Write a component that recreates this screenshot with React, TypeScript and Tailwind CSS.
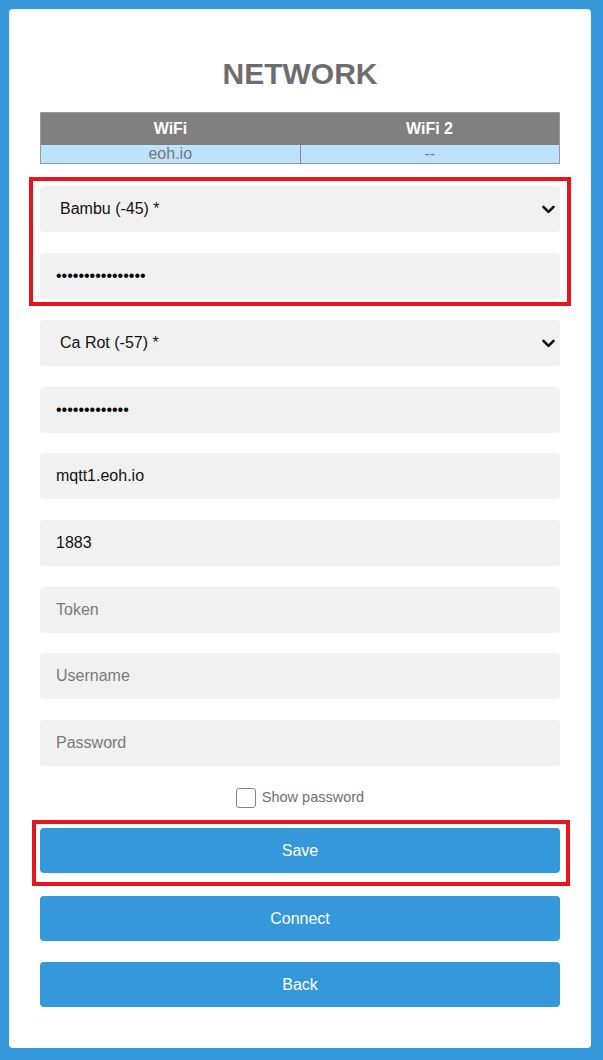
import React from "react";

const font = { fontFamily: '"Liberation Sans", Arial, sans-serif' };

function Chevron() {
  return (
    <svg width="13" height="9" viewBox="0 0 13 9" className="shrink-0">
      <path d="M1.5 1.8 L6.5 6.8 L11.5 1.8" fill="none" stroke="#111" strokeWidth="2.6" strokeLinecap="round" strokeLinejoin="round" />
    </svg>
  );
}

function SelectBox({ label }: { label: string }) {
  return (
    <div className="h-[46px] rounded-[4px] bg-[#f1f1f1] flex items-center justify-between pl-[20px] pr-[5px] text-[16px] text-[#111]">
      <span>{label}</span>
      <Chevron />
    </div>
  );
}

function Field({ value, placeholder, dots }: { value?: string; placeholder?: string; dots?: number }) {
  return (
    <div className="h-[46px] rounded-[4px] bg-[#f1f1f1] flex items-center pl-[16px] text-[16px]">
      {dots ? (
        <span className="text-[#000] tracking-[0px]">{"•".repeat(dots)}</span>
      ) : value ? (
        <span className="text-[#111]">{value}</span>
      ) : (
        <span className="text-[#7a7a7a]">{placeholder}</span>
      )}
    </div>
  );
}

function Button({ label }: { label: string }) {
  return (
    <div className="h-[45px] rounded-[4px] bg-[#3498db] flex items-center justify-center text-white text-[16px]">
      {label}
    </div>
  );
}

export default function App() {
  return (
    <div className="w-[603px] h-[1060px] bg-[#3498db] pt-[9px] pl-[9px]" style={font}>
      <div className="w-[582px] h-[1039px] bg-white rounded-[4px] px-[31px] pt-[50px]">
        <h1 className="text-center text-[30px] leading-[30px] font-bold text-[#6d6d6d]">NETWORK</h1>
        <table className="mt-[23px] w-full border-collapse border border-[#9a9a9a] text-[16px]">
          <thead>
            <tr className="bg-[#808080] h-[32px]">
              <th className="w-1/2 text-white font-bold text-center">WiFi</th>
              <th className="w-1/2 text-white font-bold text-center">WiFi 2</th>
            </tr>
          </thead>
          <tbody>
            <tr className="bg-[#bde3fc] h-[19px]">
              <td className="text-center text-[#777] leading-[18px] border-r border-[#8a8a8a]">eoh.io</td>
              <td className="text-center text-[#777] leading-[18px]">--</td>
            </tr>
          </tbody>
        </table>

        <div className="mt-[13px] -mx-[11px] border-[4px] border-[#e8141e] px-[7px] pt-[5px] pb-[3px] flex flex-col gap-[21px]">
          <SelectBox label="Bambu (-45) *" />
          <Field dots={16} />
        </div>

        <div className="mt-[14px] flex flex-col gap-[20.7px]">
          <SelectBox label="Ca Rot (-57) *" />
          <Field dots={13} />
          <Field value="mqtt1.eoh.io" />
          <Field value="1883" />
          <Field placeholder="Token" />
          <Field placeholder="Username" />
          <Field placeholder="Password" />
        </div>

        <div className="mt-[21px] h-[21px] flex items-center justify-center gap-[6px]">
          <div className="w-[20px] h-[20px] rounded-[3px] border border-[#858585] bg-white" />
          <span className="text-[14.5px] text-[#6f6f6f]">Show password</span>
        </div>

        <div className="mt-[12px] -ml-[8px] -mr-[10px] border-[4px] border-[#e8141e] pl-[4px] pr-[6px] pt-[4px] pb-[9px]">
          <Button label="Save" />
        </div>
        <div className="mt-[10px]">
          <Button label="Connect" />
        </div>
        <div className="mt-[21px]">
          <Button label="Back" />
        </div>
      </div>
    </div>
  );
}
